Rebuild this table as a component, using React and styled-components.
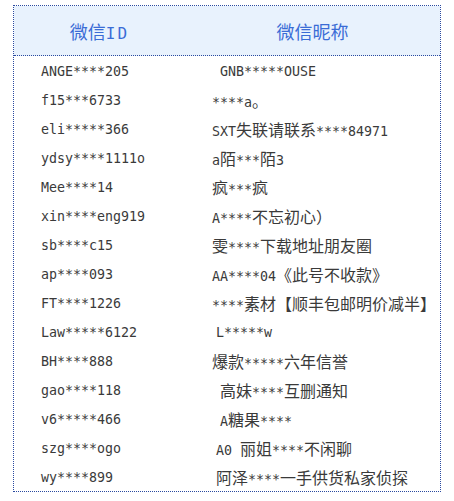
import React from "react";
import styled, { createGlobalStyle } from "styled-components";

const GlobalStyle = createGlobalStyle`
  html, body {
    margin: 0;
    padding: 0;
    background: #ffffff;
  }
`;

const Page = styled.div`
  padding: 5px 0 0 13px;
`;

const Table = styled.div`
  width: 428px;
  box-sizing: border-box;
  border: 1px dotted #2a4aa0;
`;

const Row = styled.div`
  display: grid;
  grid-template-columns: 171px 1fr;
  height: ${(props) => (props.head ? "49px" : "29px")};
  background: ${(props) => (props.head ? "#e8f2fd" : "transparent")};
  border-bottom: ${(props) => (props.head ? "1px dotted #2a4aa0" : "none")};
`;

const HeadCell = styled.div`
  display: flex;
  align-items: center;
  justify-content: center;
  color: #3a6cd6;
  font-family: "Noto Sans CJK SC", sans-serif;
  font-size: 18px;
`;

const Cell = styled.div`
  display: flex;
  align-items: center;
  padding-left: ${(props) => 27 + (props.indent || 0)}px;
  color: #3a3a3a;
  white-space: pre;
`;

const Line = styled.span`
  white-space: pre;
`;

const Latin = styled.span`
  font-family: "DejaVu Sans Mono", "Liberation Mono", monospace;
  font-size: ${(props) => (props.big ? "16px" : "13.3px")};
  letter-spacing: ${(props) => (props.big ? "2px" : "0")};
`;

const Cjk = styled.span`
  font-family: "Noto Sans CJK SC", sans-serif;
  font-size: ${(props) => (props.big ? "18px" : "16px")};
`;

// latin and cjk are set in different faces, like the original's SimHei
const Mixed = ({ text, big }) => (
  <Line>
    {text
      .split(/([\u2E80-\uFFFF]+)/)
      .filter(Boolean)
      .map((part, i) =>
        /[\u2E80-\uFFFF]/.test(part) ? (
          <Cjk key={i} big={big}>{part}</Cjk>
        ) : (
          <Latin key={i} big={big}>{part}</Latin>
        )
      )}
  </Line>
);

const rows = [
  { id: "ANGE****205", name: "GNB*****OUSE", indent: 8 },
  { id: "f15***6733", name: "****a。" },
  { id: "eli*****366", name: "SXT失联请联系****84971" },
  { id: "ydsy****1111o", name: "a陌***陌3" },
  { id: "Mee****14", name: "疯***疯" },
  { id: "xin****eng919", name: "A****不忘初心）" },
  { id: "sb****c15", name: "雯****下载地址朋友圈" },
  { id: "ap****093", name: "AA****04《此号不收款》" },
  { id: "FT****1226", name: "****素材【顺丰包邮明价减半】" },
  { id: "Law*****6122", name: "L*****w", indent: 4 },
  { id: "BH****888", name: "爆款*****六年信誉" },
  { id: "gao****118", name: "高妹****互删通知", indent: 8 },
  { id: "v6*****466", name: "A糖果****", indent: 8 },
  { id: "szg****ogo", name: "A0 丽姐****不闲聊", indent: 4 },
  { id: "wy****899", name: "阿泽****一手供货私家侦探", indent: 4 },
];

const App = () => {
  return (
    <Page>
      <GlobalStyle />
      <Table>
        <Row head>
          <HeadCell>
            <Mixed text="微信ID" big />
          </HeadCell>
          <HeadCell>
            <Mixed text="微信昵称" big />
          </HeadCell>
        </Row>
        {rows.map((item, index) => (
          <Row key={index}>
            <Cell>
              <Mixed text={item.id} />
            </Cell>
            <Cell indent={item.indent}>
              <Mixed text={item.name} />
            </Cell>
          </Row>
        ))}
      </Table>
    </Page>
  );
};

export default App;
